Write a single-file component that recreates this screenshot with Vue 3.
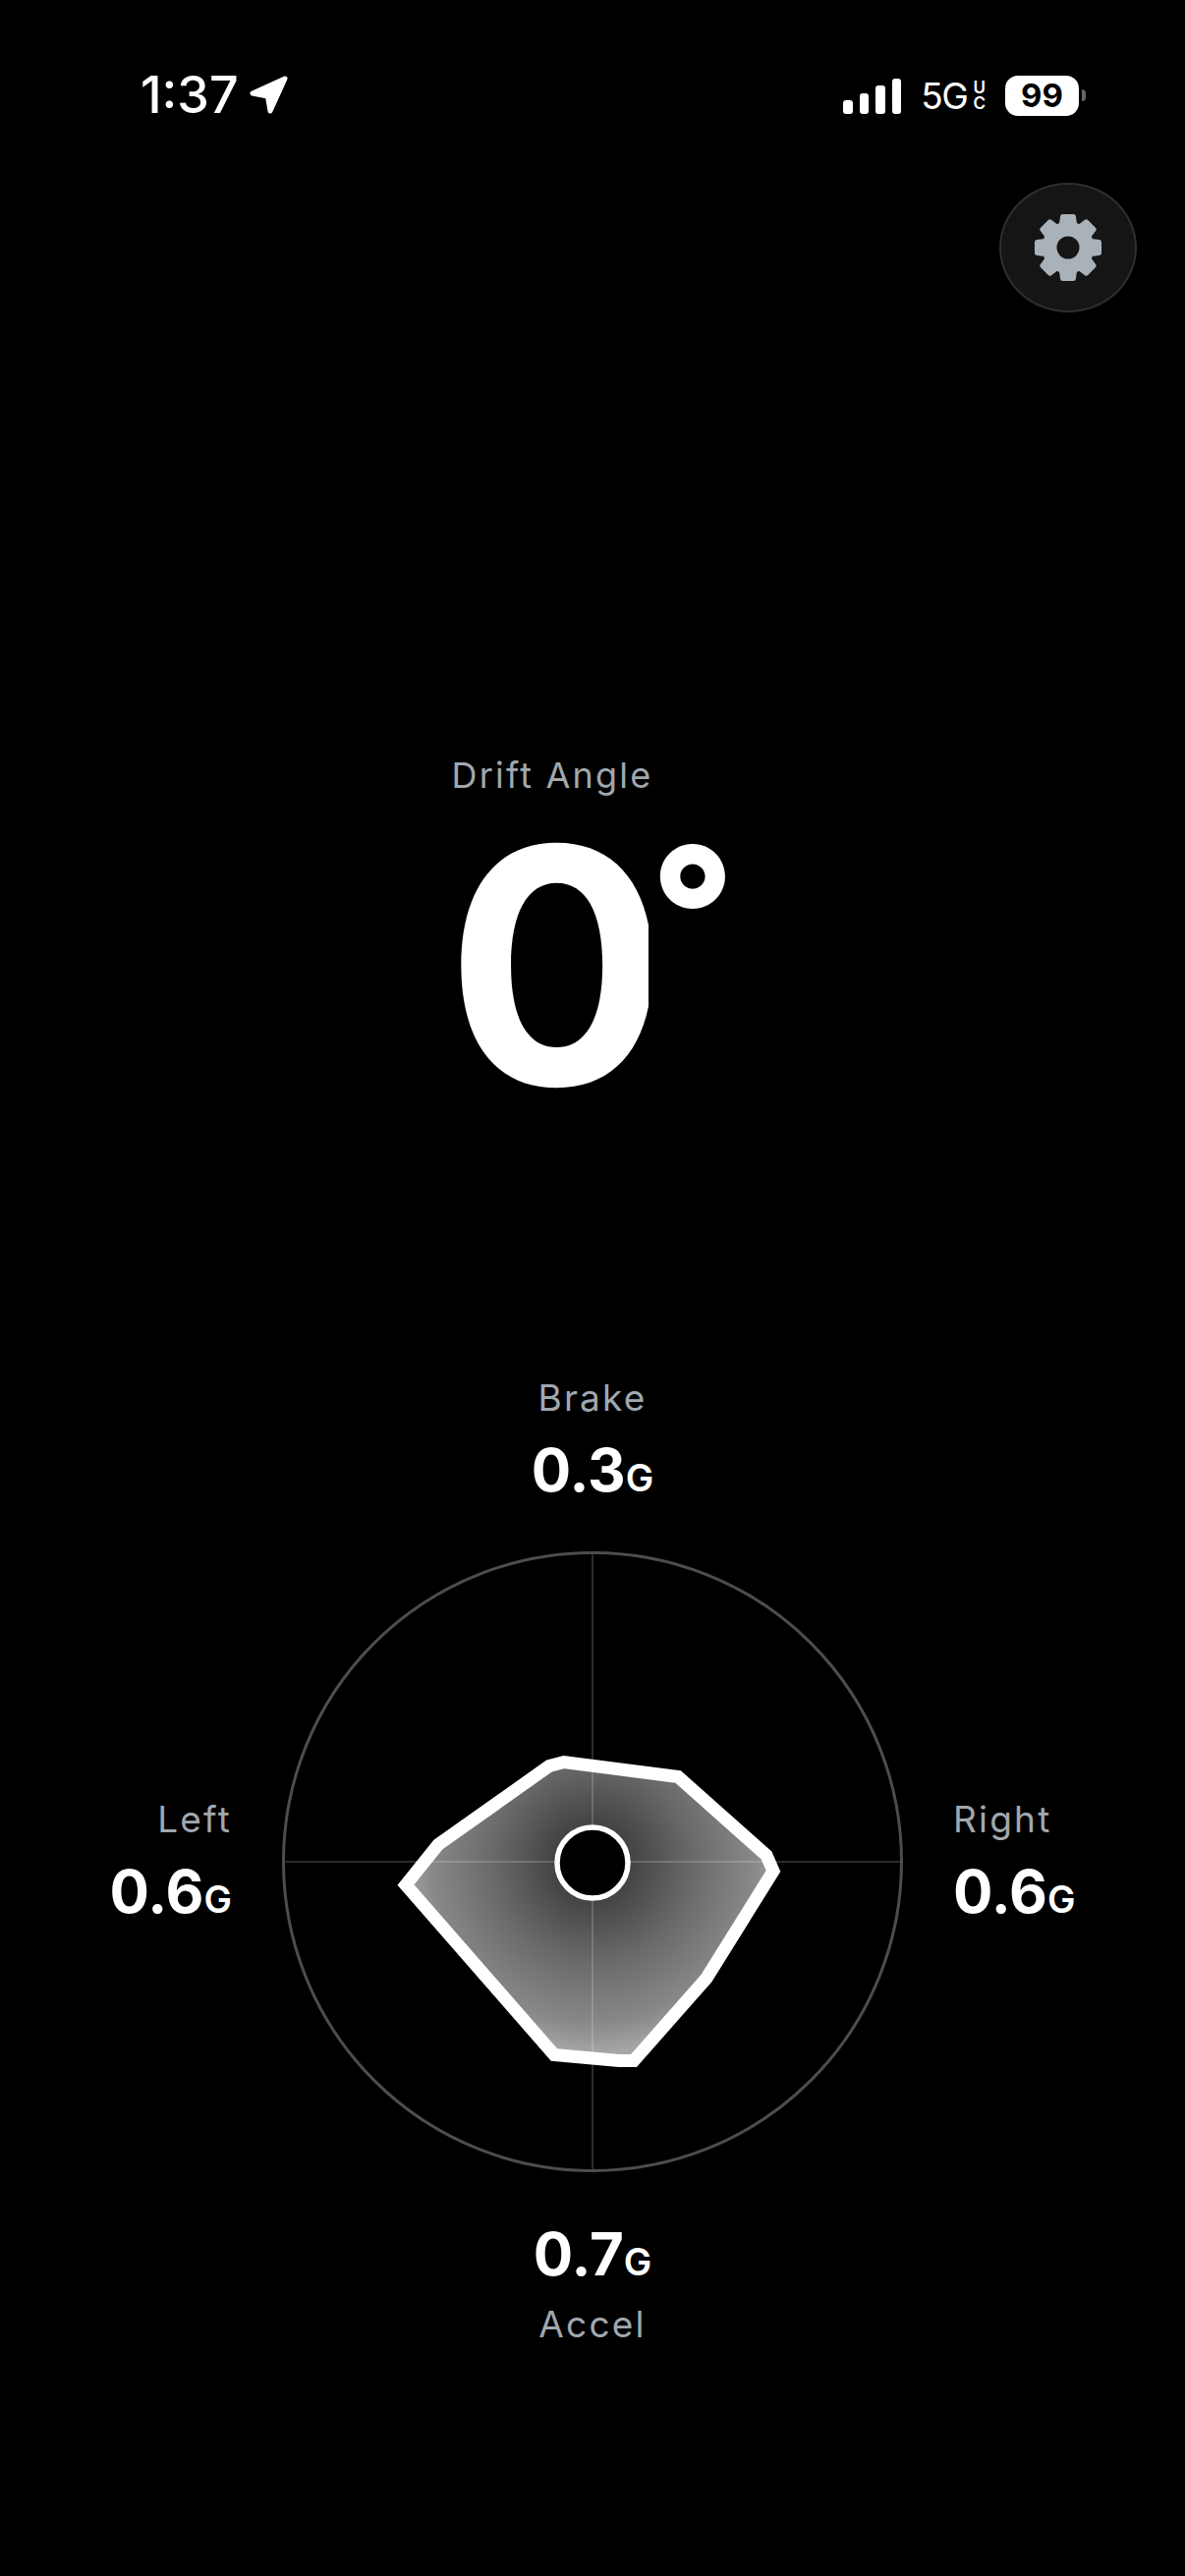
<template>
  <div class="page">
    <div class="status">
      <div class="status-left">
        <span class="time">1:37</span>
        <svg class="arrow" width="40" height="40" viewBox="0 0 40 40">
          <path d="M36 3 L3 18 L18.500 21 L21 36 Z" fill="#fff" stroke="#fff" stroke-width="5" stroke-linejoin="round" />
        </svg>
      </div>
      <div class="status-right">
        <div class="signal">
          <i v-for="h in signalBars" :key="h" :style="{ height: h + 'px' }"></i>
        </div>
        <div class="network">
          <span class="fiveg">5G</span>
          <span class="uc"><b>U</b><b>C</b></span>
        </div>
        <div class="battery">
          <span class="battery-body">99</span>
          <i class="battery-nub"></i>
        </div>
      </div>
    </div>

    <div class="toolbar">
      <button class="settings">
        <svg width="76" height="76" viewBox="0 0 76 76">
          <path :d="gearPath" fill="#a9b2b8" stroke="#a9b2b8" stroke-width="5" stroke-linejoin="round" />
          <circle cx="38" cy="38" r="11.500" fill="#151515" />
        </svg>
      </button>
    </div>

    <div class="drift">
      <div class="label">Drift Angle</div>
      <div class="drift-value">
        <span class="drift-number">0</span>
        <span class="drift-degree">°</span>
      </div>
    </div>

    <div class="gforce">
      <div class="stat stat-top">
        <div class="label">Brake</div>
        <div class="value">0.3<small>G</small></div>
      </div>
      <div class="stat stat-left">
        <div class="label">Left</div>
        <div class="value">0.6<small>G</small></div>
      </div>
      <svg class="radar" width="634" height="634" viewBox="0 0 634 634">
        <defs>
          <radialGradient id="radarFill" gradientUnits="userSpaceOnUse" cx="317" cy="317" r="205">
            <stop offset="0.2" stop-color="#454545" />
            <stop offset="0.5" stop-color="#6a6a6a" />
            <stop offset="0.8" stop-color="#888888" />
            <stop offset="1" stop-color="#b0b0b0" />
          </radialGradient>
        </defs>
        <polygon :points="radarPoints" fill="url(#radarFill)" />
        <line x1="317" y1="2" x2="317" y2="632" class="axis" />
        <line x1="2" y1="317" x2="632" y2="317" class="axis" />
        <circle cx="317" cy="317" r="314.500" fill="none" stroke="#4d4d4d" stroke-width="3" />
        <polygon :points="radarPoints" fill="none" stroke="#fff" stroke-width="13" stroke-linejoin="miter" />
        <circle cx="317" cy="318" r="36" fill="#000" stroke="#fff" stroke-width="5.500" />
      </svg>
      <div class="stat stat-right">
        <div class="label">Right</div>
        <div class="value">0.6<small>G</small></div>
      </div>
      <div class="stat stat-bottom">
        <div class="value">0.7<small>G</small></div>
        <div class="label">Accel</div>
      </div>
    </div>
  </div>
</template>

<script setup>
import { computed } from 'vue'

const signalBars = [14, 21, 29, 36]

const radar = [
  [127, 340.5], [160, 299.5], [273, 219.5], [288, 215.5], [404, 230.5], [494, 310.5],
  [501, 326.5], [433, 435.5], [359, 519.5], [344, 519.5], [278, 513.5]
]
const radarPoints = radar.map((p) => p.join(',')).join(' ')

// 8 teeth around the middle of the icon
const gearPath = computed(() => {
  const pts = []
  for (let i = 0; i < 8; i++) {
    const a = (i * Math.PI) / 4 - Math.PI / 2
    const at = (r, d) => {
      const x = 38 + r * Math.cos(a + d)
      const y = 38 + r * Math.sin(a + d)
      return `${x.toFixed(2)} ${y.toFixed(2)}`
    }
    pts.push(at(24, -0.28), at(32, -0.17), at(32, 0.17), at(24, 0.28))
  }
  return 'M' + pts.join(' L') + ' Z'
})
</script>

<style>
html,
body {
  margin: 0;
  background: #000;
}
</style>

<style scoped>
.page {
  width: 1206px;
  height: 2622px;
  background: #000;
  color: #fff;
  font-family: Inter, "Liberation Sans", sans-serif;
  display: flex;
  flex-direction: column;
  overflow: hidden;
}
.status {
  height: 42px;
  margin-top: 76px;
  padding: 0 101px 0 143px;
  display: flex;
  justify-content: space-between;
  align-items: center;
}
.status-left,
.status-right {
  display: flex;
  align-items: center;
}
.time {
  font-size: 52px;
  font-weight: 500;
  line-height: 42px;
}
.arrow {
  margin-left: 11px;
}
.signal {
  display: flex;
  align-items: flex-end;
  gap: 7px;
  height: 38px;
}
.signal i {
  width: 9.500px;
  border-radius: 3px;
  background: #fff;
}
.network {
  display: flex;
  align-items: center;
  margin-left: 20px;
}
.fiveg {
  font-size: 37px;
  font-weight: 400;
  letter-spacing: -1.500px;
}
.uc {
  display: flex;
  flex-direction: column;
  margin-left: 6px;
}
.uc b {
  font-size: 17px;
  line-height: 16px;
  font-weight: 600;
}
.battery {
  display: flex;
  align-items: center;
  margin-left: 20px;
}
.battery-body {
  width: 75px;
  height: 41px;
  border-radius: 13px;
  background: #fff;
  color: #000;
  font-size: 33px;
  font-weight: 700;
  line-height: 41px;
  text-align: center;
}
.battery-nub {
  width: 4px;
  height: 12px;
  margin-left: 3px;
  border-radius: 0 4px 4px 0;
  background: #666;
}
.toolbar {
  display: flex;
  justify-content: flex-end;
  padding-right: 49px;
  margin-top: 68px;
}
.settings {
  width: 140px;
  height: 132px;
  padding: 0;
  border: 2px solid #2e2e2e;
  border-radius: 50%;
  background: #151515;
  display: flex;
  align-items: center;
  justify-content: center;
}
.drift {
  align-self: flex-start;
  width: 400px;
  margin: 449px 0 0 362px;
  display: flex;
  flex-direction: column;
  align-items: center;
}
.label {
  color: #a0a8ae;
  font-size: 36px;
  line-height: 44px;
  letter-spacing: 2.200px;
}
.drift-value {
  display: flex;
  align-items: flex-start;
  align-self: flex-start;
  margin: 27px 0 0 92px;
  height: 290px;
}
.drift-number {
  width: 206px;
  overflow: hidden;
  font-size: 334px;
  font-weight: 700;
  line-height: 290px;
}
.drift-degree {
  margin: 5px 0 0 2px;
  font-size: 186px;
  font-weight: 800;
  line-height: 170px;
}
.gforce {
  display: grid;
  grid-template-columns: 1fr 634px 1fr;
  column-gap: 50px;
  align-items: center;
  margin-top: 273px;
}
.stat-top,
.stat-bottom {
  grid-column: 2;
  text-align: center;
}
.stat-top {
  grid-row: 1;
  margin-bottom: 39px;
}
.stat-bottom {
  grid-row: 3;
  margin-top: 47px;
}
.stat-left,
.stat-right {
  grid-row: 2;
  padding-top: 8px;
}
.stat-left {
  grid-column: 1;
  text-align: right;
}
.stat-right {
  grid-column: 3;
}
.radar {
  grid-row: 2;
  grid-column: 2;
  display: block;
}
.axis {
  stroke: rgba(255, 255, 255, 0.17);
  stroke-width: 2;
}
.value {
  margin-top: 16px;
  font-size: 60px;
  font-weight: 700;
  line-height: 70px;
}
.value small {
  font-size: 38px;
  font-weight: 600;
}
.stat-bottom .value {
  margin-top: 0;
  margin-bottom: 7px;
}
.stat .label {
  font-size: 37px;
}
</style>
